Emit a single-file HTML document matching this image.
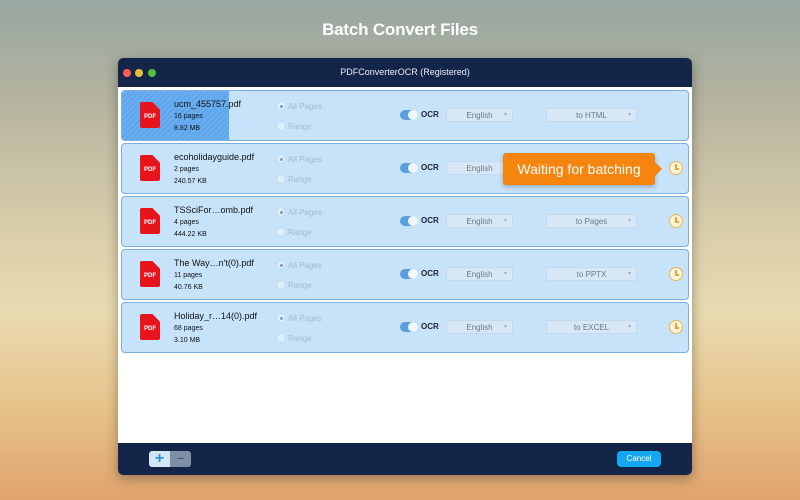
<!DOCTYPE html>
<html><head><style>
*{margin:0;padding:0;box-sizing:border-box}
body{width:800px;height:500px;overflow:hidden;font-family:"Liberation Sans",sans-serif;
background:linear-gradient(180deg,#97a7a1 0%,#b5b39f 20%,#d8cdaa 45%,#e9dbb0 62%,#e8c58e 80%,#dfa36c 100%);position:relative}
h1{position:absolute;top:20px;left:0;width:800px;text-align:center;color:#fff;font-size:17px;font-weight:bold;letter-spacing:-0.2px}
.win{position:absolute;left:118px;top:58px;width:574px;height:417px;border-radius:5px;overflow:hidden;background:#fff;box-shadow:0 3px 12px rgba(0,0,0,.35)}
.tb{height:29px;background:#13264a;color:#e8ecf3;font-size:9px;text-align:center;line-height:29px;position:relative}
.dot{position:absolute;top:11px;width:8px;height:8px;border-radius:50%}
.foot{position:absolute;left:0;bottom:0;width:574px;height:32px;background:#13264a}
.row{position:absolute;left:3px;width:568px;height:51px;background:#c6e3fa;border:1px solid #7eaedb;border-radius:4px;overflow:hidden}
.prog{position:absolute;left:0;top:0;width:107px;height:51px;background:repeating-linear-gradient(135deg,#5ea6ec 0 2px,#6aaef0 2px 4px)}
.pdf{position:absolute;left:18px;top:11px;width:20px;height:26px;background:#e8141c;border-radius:2px;clip-path:polygon(0 0,62% 0,100% 30%,100% 100%,0 100%);color:#fff;font-size:6px;font-weight:bold;text-align:center;line-height:30px}
.nm{position:absolute;left:52px;top:8px;font-size:9px;color:#111}
.pg{position:absolute;left:52px;top:22px;font-size:7px;color:#111}
.sz{position:absolute;left:52px;top:34px;font-size:7px;color:#111}
.rd{position:absolute;left:154px;width:10px;height:10px;border-radius:50%;background:#dceefc;border:1px solid #bcd7ee}
.rd.on::after{content:"";position:absolute;left:3px;top:3px;width:3px;height:3px;border-radius:50%;background:#8a9aa8}
.rl{position:absolute;left:166px;font-size:8px;color:#a7b8c8}
.tg{position:absolute;left:278px;top:19px;width:18px;height:10px;border-radius:5px;background:#5b9ede}
.tg::after{content:"";position:absolute;right:0;top:0;width:10px;height:10px;border-radius:50%;background:#f2f7fc}
.ocr{position:absolute;left:299px;top:19px;font-size:8px;font-weight:bold;color:#223}
.dd{position:absolute;top:17px;height:14px;background:#d7e7f6;border:1px solid #c4d9ec;font-size:8px;color:#6a7a8a;text-align:center;line-height:13px}
.dd::after{content:"▾";position:absolute;right:5px;top:0;font-size:6px;color:#aab}
.clk{position:absolute;left:547px;top:17px;width:14px;height:14px;border-radius:50%;background:#fff4d8;border:1.5px solid #e8b455}
.clk::before{content:"";position:absolute;left:5px;top:2px;width:1.5px;height:5px;background:#e8a53a}
.clk::after{content:"";position:absolute;left:5px;top:6px;width:4px;height:1.5px;background:#e8a53a}
.tip{position:absolute;left:503px;top:153px;width:152px;height:32px;background:#f5850f;border-radius:3px;color:#fff;font-size:14px;line-height:32px;text-align:center;box-shadow:0 2px 5px rgba(0,0,0,.25)}
.tip::after{content:"";position:absolute;right:-7px;top:9px;border-left:7px solid #f5850f;border-top:7px solid transparent;border-bottom:7px solid transparent}
</style></head><body>
<h1>Batch Convert Files</h1>
<div class="win">
<div class="tb"><span class="dot" style="left:5px;background:#fc5b57"></span><span class="dot" style="left:17px;background:#e5bf3c"></span><span class="dot" style="left:30px;background:#57c038"></span>PDFConverterOCR (Registered)</div>

<div class="row" style="top:32px"><div class="prog"></div><div class="pdf">PDF</div><div class="nm">ucm_455757.pdf</div><div class="pg">16 pages</div><div class="sz">8.82 MB</div>
<div class="rd on" style="top:10px"></div><div class="rl" style="top:11px">All Pages</div><div class="rd" style="top:30px"></div><div class="rl" style="top:31px">Range</div>
<div class="tg"></div><div class="ocr">OCR</div><div class="dd" style="left:324px;width:67px">English</div><div class="dd" style="left:424px;width:91px">to HTML</div></div>

<div class="row" style="top:85px"><div class="pdf">PDF</div><div class="nm">ecoholidayguide.pdf</div><div class="pg">2 pages</div><div class="sz">240.57 KB</div>
<div class="rd on" style="top:10px"></div><div class="rl" style="top:11px">All Pages</div><div class="rd" style="top:30px"></div><div class="rl" style="top:31px">Range</div>
<div class="tg"></div><div class="ocr">OCR</div><div class="dd" style="left:324px;width:67px">English</div><div class="clk"></div></div>

<div class="row" style="top:138px"><div class="pdf">PDF</div><div class="nm">TSSciFor…omb.pdf</div><div class="pg">4 pages</div><div class="sz">444.22 KB</div>
<div class="rd on" style="top:10px"></div><div class="rl" style="top:11px">All Pages</div><div class="rd" style="top:30px"></div><div class="rl" style="top:31px">Range</div>
<div class="tg"></div><div class="ocr">OCR</div><div class="dd" style="left:324px;width:67px">English</div><div class="dd" style="left:424px;width:91px">to Pages</div><div class="clk"></div></div>

<div class="row" style="top:191px"><div class="pdf">PDF</div><div class="nm">The Way…n't(0).pdf</div><div class="pg">11 pages</div><div class="sz">40.76 KB</div>
<div class="rd on" style="top:10px"></div><div class="rl" style="top:11px">All Pages</div><div class="rd" style="top:30px"></div><div class="rl" style="top:31px">Range</div>
<div class="tg"></div><div class="ocr">OCR</div><div class="dd" style="left:324px;width:67px">English</div><div class="dd" style="left:424px;width:91px">to PPTX</div><div class="clk"></div></div>

<div class="row" style="top:244px"><div class="pdf">PDF</div><div class="nm">Holiday_r…14(0).pdf</div><div class="pg">68 pages</div><div class="sz">3.10 MB</div>
<div class="rd on" style="top:10px"></div><div class="rl" style="top:11px">All Pages</div><div class="rd" style="top:30px"></div><div class="rl" style="top:31px">Range</div>
<div class="tg"></div><div class="ocr">OCR</div><div class="dd" style="left:324px;width:67px">English</div><div class="dd" style="left:424px;width:91px">to EXCEL</div><div class="clk"></div></div>

<div class="foot">
<div style="position:absolute;left:31px;top:8px;width:21px;height:16px;background:#d4e6f6;border-radius:3px 0 0 3px;color:#2a8ee0;font-size:16px;line-height:15px;text-align:center;font-weight:bold">+</div>
<div style="position:absolute;left:52px;top:8px;width:21px;height:16px;background:#7c8fa6;border-radius:0 3px 3px 0;color:#3e5574;font-size:14px;line-height:15px;text-align:center">−</div>
<div style="position:absolute;left:499px;top:8px;width:44px;height:16px;background:#15a8f2;border-radius:4px;color:#fff;font-size:8px;line-height:16px;text-align:center">Cancel</div>
</div>
</div>
<div class="tip">Waiting for batching</div>
</body></html>
